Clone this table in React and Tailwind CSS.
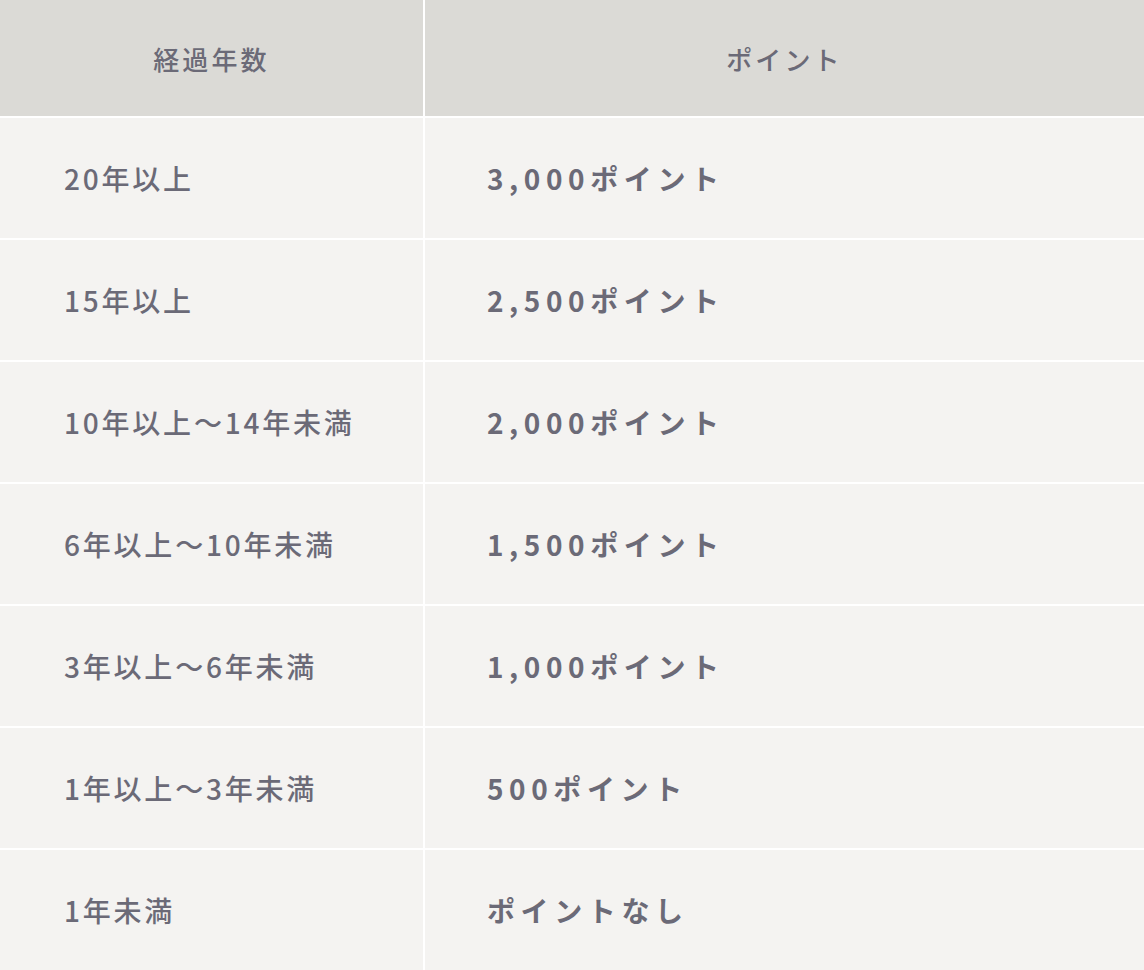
import React from 'react';

const rows = [
  { years: '20年以上', points: '3,000ポイント' },
  { years: '15年以上', points: '2,500ポイント' },
  { years: '10年以上〜14年未満', points: '2,000ポイント' },
  { years: '6年以上〜10年未満', points: '1,500ポイント' },
  { years: '3年以上〜6年未満', points: '1,000ポイント' },
  { years: '1年以上〜3年未満', points: '500ポイント' },
  { years: '1年未満', points: 'ポイントなし' },
];

const App = () => {
  return (
    <div
      className="w-[1144px] h-[970px] overflow-hidden bg-white text-[#6b6a77]"
      style={{ fontFamily: '"Noto Sans CJK JP", "Noto Sans", sans-serif' }}
    >
      <div className="grid grid-cols-[423px_1fr] gap-[2px] bg-white">
        {/*-------header-------*/}
        <div className="h-[116px] bg-[#dbdad6] flex items-center justify-center text-[26px] font-medium tracking-[0.12em]">
          経過年数
        </div>
        <div className="h-[116px] bg-[#dbdad6] flex items-center justify-center text-[26px] font-medium tracking-[0.12em]">
          ポイント
        </div>
        {/*-------rows-------*/}
        {rows.map((row, index) => (
          <React.Fragment key={index}>
            <div className="h-[120px] bg-[#f4f3f1] flex items-center pl-16 text-[28px] font-medium tracking-[0.1em]">
              {row.years}
            </div>
            <div className="h-[120px] bg-[#f4f3f1] flex items-center pl-[62px] text-[28px] font-bold tracking-[0.2em]">
              {row.points}
            </div>
          </React.Fragment>
        ))}
      </div>
    </div>
  );
};

export default App;
